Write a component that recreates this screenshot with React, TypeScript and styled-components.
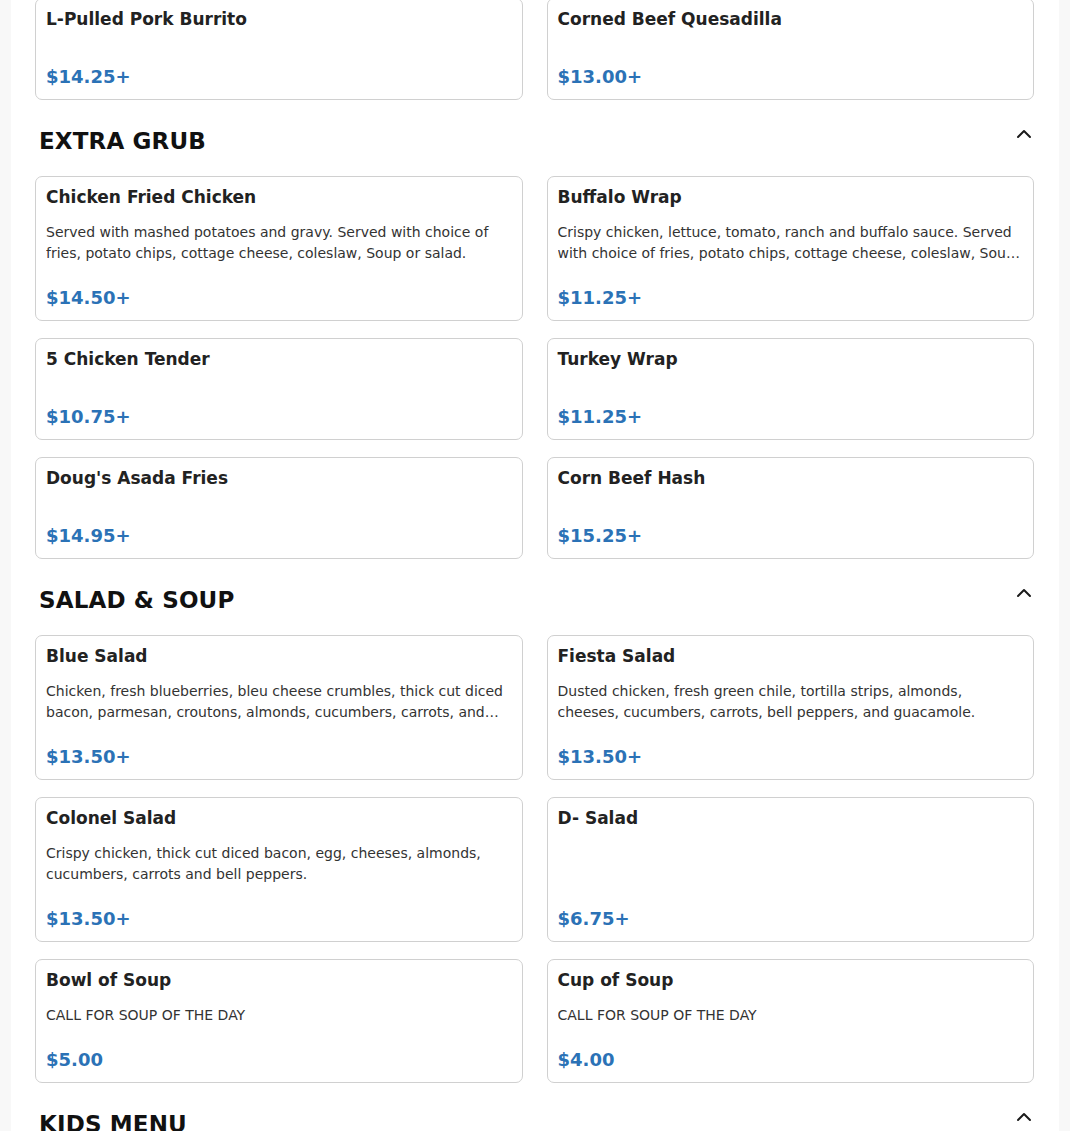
import React from "react";
import styled, { createGlobalStyle } from "styled-components";

const GlobalStyle = createGlobalStyle`
  html, body {
    margin: 0;
    padding: 0;
    background: #f8f8f8;
    font-family: "DejaVu Sans", "Liberation Sans", sans-serif;
  }
  * { box-sizing: border-box; }
`;

const Page = styled.div`
  width: 1048px;
  margin: 0 auto;
  background: #ffffff;
  padding: 0 25px 40px 24px;
  overflow: hidden;
`;

const Grid = styled.div<{ $first?: boolean }>`
  display: grid;
  grid-template-columns: 1fr 1fr;
  column-gap: 24px;
  row-gap: 17px;
  margin-top: ${(p) => (p.$first ? "-2px" : "0")};
`;

const Card = styled.div`
  display: flex;
  flex-direction: column;
  border: 1px solid #d0d0d0;
  border-radius: 7px;
  padding: 9px 10px 11px;
  background: #fff;
`;

const Title = styled.div`
  font-size: 17px;
  line-height: 22px;
  font-weight: 700;
  color: #222222;
`;

const Desc = styled.div<{ $empty?: boolean }>`
  margin: 14px 0 ${(p) => (p.$empty ? "21px" : "22px")};
  font-size: 14px;
  line-height: 21px;
  color: #333333;
  display: -webkit-box;
  -webkit-line-clamp: 2;
  -webkit-box-orient: vertical;
  overflow: hidden;
`;

const Price = styled.div`
  margin-top: auto;
  font-size: 18px;
  line-height: 23px;
  font-weight: 700;
  color: #2b72b6;
`;

const SectionHeader = styled.div`
  display: flex;
  align-items: flex-start;
  justify-content: space-between;
  padding: 28px 2px 22px 4px;
`;

const SectionTitle = styled.h2`
  margin: 0;
  font-size: 23px;
  line-height: 26px;
  font-weight: 700;
  color: #111111;
  letter-spacing: 0.15px;
`;

const ChevronBox = styled.span`
  display: flex;
  margin-top: 1px;
`;

const Chevron = () => (
  <ChevronBox>
    <svg width="16" height="10" viewBox="0 0 16 10" fill="none">
      <polyline
        points="2,8 8,2 14,8"
        stroke="#1a1a1a"
        strokeWidth="2"
        strokeLinecap="round"
        strokeLinejoin="round"
      />
    </svg>
  </ChevronBox>
);

type Item = { name: string; desc?: string; price: string };

const MenuCard = ({ item }: { item: Item }) => (
  <Card>
    <Title>{item.name}</Title>
    <Desc $empty={!item.desc}>{item.desc}</Desc>
    <Price>{item.price}</Price>
  </Card>
);

const topItems: Item[] = [
  { name: "L-Pulled Pork Burrito", price: "$14.25+" },
  { name: "Corned Beef Quesadilla", price: "$13.00+" },
];

const sections: { title: string; items: Item[] }[] = [
  {
    title: "EXTRA GRUB",
    items: [
      {
        name: "Chicken Fried Chicken",
        desc: "Served with mashed potatoes and gravy. Served with choice of fries, potato chips, cottage cheese, coleslaw, Soup or salad.",
        price: "$14.50+",
      },
      {
        name: "Buffalo Wrap",
        desc: "Crispy chicken, lettuce, tomato, ranch and buffalo sauce. Served with choice of fries, potato chips, cottage cheese, coleslaw, Soup or salad.",
        price: "$11.25+",
      },
      { name: "5 Chicken Tender", price: "$10.75+" },
      { name: "Turkey Wrap", price: "$11.25+" },
      { name: "Doug's Asada Fries", price: "$14.95+" },
      { name: "Corn Beef Hash", price: "$15.25+" },
    ],
  },
  {
    title: "SALAD & SOUP",
    items: [
      {
        name: "Blue Salad",
        desc: "Chicken, fresh blueberries, bleu cheese crumbles, thick cut diced bacon, parmesan, croutons, almonds, cucumbers, carrots, and bell peppers.",
        price: "$13.50+",
      },
      {
        name: "Fiesta Salad",
        desc: "Dusted chicken, fresh green chile, tortilla strips, almonds, cheeses, cucumbers, carrots, bell peppers, and guacamole.",
        price: "$13.50+",
      },
      {
        name: "Colonel Salad",
        desc: "Crispy chicken, thick cut diced bacon, egg, cheeses, almonds, cucumbers, carrots and bell peppers.",
        price: "$13.50+",
      },
      { name: "D- Salad", price: "$6.75+" },
      { name: "Bowl of Soup", desc: "CALL FOR SOUP OF THE DAY", price: "$5.00" },
      { name: "Cup of Soup", desc: "CALL FOR SOUP OF THE DAY", price: "$4.00" },
    ],
  },
  { title: "KIDS MENU", items: [{ name: "Kids Burger", price: "$7.50+" }, { name: "Kids Chicken Tenders", price: "$7.50+" }] },
];

export default function App() {
  return (
    <>
      <GlobalStyle />
      <Page>
        <Grid $first>
          {topItems.map((it) => (
            <MenuCard key={it.name} item={it} />
          ))}
        </Grid>
        {sections.map((s) => (
          <section key={s.title}>
            <SectionHeader>
              <SectionTitle>{s.title}</SectionTitle>
              <Chevron />
            </SectionHeader>
            <Grid>
              {s.items.map((it) => (
                <MenuCard key={it.name} item={it} />
              ))}
            </Grid>
          </section>
        ))}
      </Page>
    </>
  );
}
